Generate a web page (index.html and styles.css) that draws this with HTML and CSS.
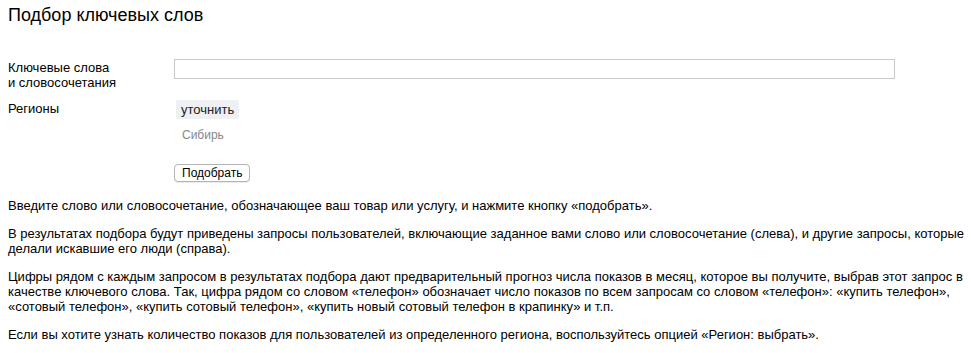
FILE: index.html
```html
<!doctype html>
<html lang="ru">
  <head>
    <meta charset="UTF-8" />
    <meta name="viewport" content="width=device-width, initial-scale=1.0" />
    <title>Подбор ключевых слов</title>
    <link rel="stylesheet" href="styles.css">
  </head>
  <body>
    <h1 class="page-title">Подбор ключевых слов</h1>

    <form class="wordstat-form">
      <div class="form-row">
        <label class="form-label" for="words">Ключевые слова<br>и словосочетания</label>
        <div class="form-field">
          <input type="text" id="words" class="words-input" autocomplete="off" />
        </div>
      </div>

      <div class="form-row">
        <div class="form-label">Регионы</div>
        <div class="form-field">
          <button type="button" class="region-button">уточнить</button>
          <div class="region-current">Сибирь</div>
        </div>
      </div>

      <div class="form-row form-submit">
        <div class="form-label"></div>
        <div class="form-field">
          <button type="submit" class="submit-button">Подобрать</button>
        </div>
      </div>
    </form>

    <div class="help">
      <p>Введите слово или словосочетание, обозначающее ваш товар или услугу, и нажмите кнопку «подобрать».</p>
      <p>В результатах подбора будут приведены запросы пользователей, включающие заданное вами слово или словосочетание (слева), и другие запросы, которые делали искавшие его люди (справа).</p>
      <p>Цифры рядом с каждым запросом в результатах подбора дают предварительный прогноз числа показов в месяц, которое вы получите, выбрав этот запрос в качестве ключевого слова. Так, цифра рядом со словом «телефон» обозначает число показов по всем запросам со словом «телефон»: «купить телефон», «сотовый телефон», «купить сотовый телефон», «купить новый сотовый телефон в крапинку» и т.п.</p>
      <p>Если вы хотите узнать количество показов для пользователей из определенного региона, воспользуйтесь опцией «Регион: выбрать».</p>
    </div>
  </body>
</html>
```

FILE: styles.css
```css
* {
  box-sizing: border-box;
}

body {
  margin: 0;
  padding: 4px 4px 0 8px;
  background: #fff;
  color: #000;
  font-family: "Liberation Sans", Arial, Helvetica, sans-serif;
  font-size: 13px;
  line-height: 15px;
}

.page-title {
  margin: 0;
  font-size: 18px;
  font-weight: normal;
  line-height: 22px;
}

.wordstat-form {
  margin-top: 33px;
}

.form-row {
  display: flex;
  align-items: flex-start;
}

.form-row + .form-row {
  margin-top: 10px;
}

.form-label {
  width: 166px;
  flex-shrink: 0;
  padding-top: 1px;
}

.form-field {
  flex: 1;
}

.words-input {
  display: block;
  width: 721px;
  height: 20px;
  margin: 0;
  padding: 1px 3px;
  border: 1px solid #c8c8c8;
  font: inherit;
  outline: none;
}

.region-button {
  display: block;
  margin: 0 0 0 2px;
  padding: 2px 5px;
  height: 19px;
  background: #eef0f3;
  border: none;
  border-radius: 2px;
  color: #222;
  font: inherit;
  line-height: 15px;
  cursor: pointer;
}

.region-current {
  margin: 9px 0 0 8px;
  color: #888;
  font-size: 12px;
}

.form-submit {
  margin-top: 21px !important;
}

.submit-button {
  display: block;
  margin: 0;
  height: 18px;
  padding: 0 7px;
  background: #fff;
  border: 1px solid #b4b4b4;
  border-radius: 4px;
  box-shadow: 0 1px 0 rgba(0, 0, 0, 0.08);
  color: #000;
  font: inherit;
  font-size: 12px;
  line-height: 16px;
  cursor: pointer;
}

.help {
  margin-top: 16px;
}

.help p {
  margin: 0 0 13px 0;
}
```
